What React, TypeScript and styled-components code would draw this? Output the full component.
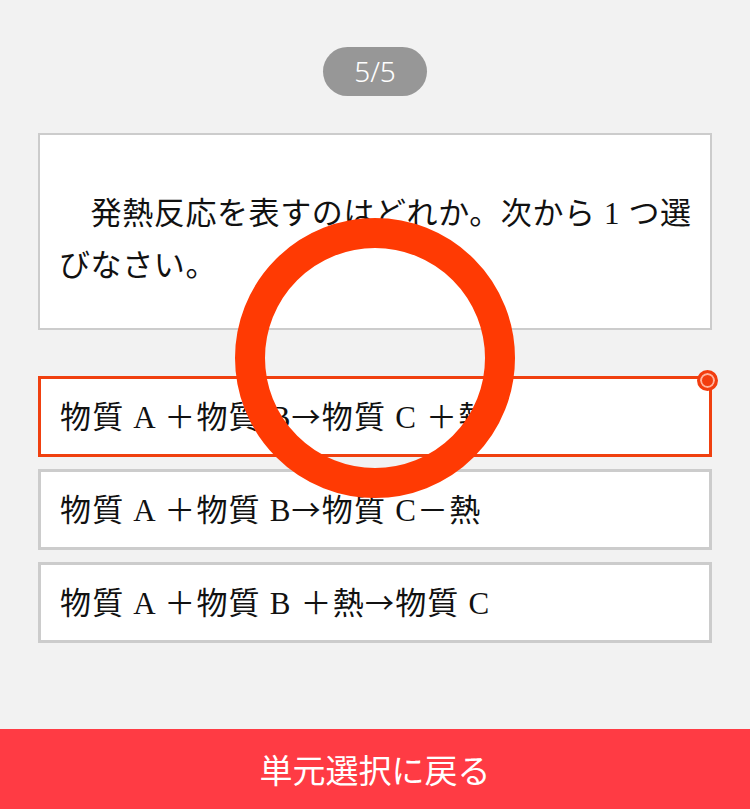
import styled, { createGlobalStyle } from 'styled-components';

const GlobalStyle = createGlobalStyle`
  html, body {
    margin: 0;
    padding: 0;
    background: #f2f2f2;
  }
  body {
    font-family: "Noto Sans CJK JP", "Noto Sans", sans-serif;
  }
`

const Page = styled.div`
  position: relative;
  height: 100vh;
  display: flex;
  flex-direction: column;
  overflow: hidden;
`

const Main = styled.div`
  flex: 1;
  display: flex;
  flex-direction: column;
  align-items: center;
  padding: 47px 38px 0;
`

const Counter = styled.div`
  width: 104px;
  height: 49px;
  border-radius: 25px;
  background: #979797;
  color: #fff;
  font-size: 28px;
  font-weight: 300;
  line-height: 49px;
  text-align: center;
  font-family: "Noto Sans", "Noto Sans CJK JP", sans-serif;
`

const QuestionCard = styled.div`
  box-sizing: border-box;
  width: 100%;
  height: 197px;
  margin-top: 37px;
  background: #fff;
  border: 2px solid #cccccc;
  padding: 53px 10px 0 19px;
  font-family: "Liberation Serif", "Noto Sans CJK JP", serif;
  font-size: 31px;
  line-height: 52px;
  letter-spacing: 0.6px;
  color: #111;
`

const Choices = styled.div`
  width: 100%;
  margin-top: 46px;
  display: flex;
  flex-direction: column;
  gap: 12px;
`

const Choice = styled.div<{ $selected?: boolean }>`
  position: relative;
  box-sizing: border-box;
  height: 81px;
  background: #fff;
  border: 3px solid ${p => (p.$selected ? '#f0400f' : '#cccccc')};
  padding: 0 0 4px 19px;
  display: flex;
  align-items: center;
  font-family: "Liberation Serif", "Noto Sans CJK JP", serif;
  font-size: 31px;
  letter-spacing: 1.2px;
  color: #111;
  white-space: pre;
`

const Arrow = styled.span`
  font-family: "Noto Sans CJK JP", sans-serif;
  font-size: 29px;
`

const CornerDot = styled.span`
  position: absolute;
  top: -9px;
  right: -9px;
  width: 15px;
  height: 15px;
  border-radius: 50%;
  background: #f23d0f;
  border: 3px solid #f23d0f;
  box-shadow: inset 0 0 0 2px #ffb49e;
`

const BackButton = styled.button`
  width: 100%;
  height: 80px;
  border: none;
  background: #ff3b44;
  color: #fff;
  font-family: "Noto Sans CJK JP", sans-serif;
  font-size: 33px;
  cursor: pointer;
  padding: 0;
`

const Ring = styled.div`
  position: absolute;
  left: 235px;
  top: 218px;
  width: 280px;
  height: 280px;
  box-sizing: border-box;
  border-radius: 50%;
  border: 30px solid #ff3a03;
  pointer-events: none;
`

const choices = [
  { parts: ['物質 A ＋物質 B', '物質 C ＋熱'], selected: true },
  { parts: ['物質 A ＋物質 B', '物質 C－熱'], selected: false },
  { parts: ['物質 A ＋物質 B ＋熱', '物質 C'], selected: false },
]

export default function App() {
  return (
    <>
      <GlobalStyle />
      <Page>
        <Main>
          <Counter>5/5</Counter>
          <QuestionCard>
            {'\u3000発熱反応を表すのはどれか。次から 1 つ選びなさい。'}
          </QuestionCard>
          <Choices>
            {choices.map((c, i) => (
              <Choice key={i} $selected={c.selected}>
                {c.parts[0]}
                <Arrow>→</Arrow>
                {c.parts[1]}
                {c.selected && <CornerDot />}
              </Choice>
            ))}
          </Choices>
        </Main>
        <BackButton>単元選択に戻る</BackButton>
        <Ring />
      </Page>
    </>
  )
}
